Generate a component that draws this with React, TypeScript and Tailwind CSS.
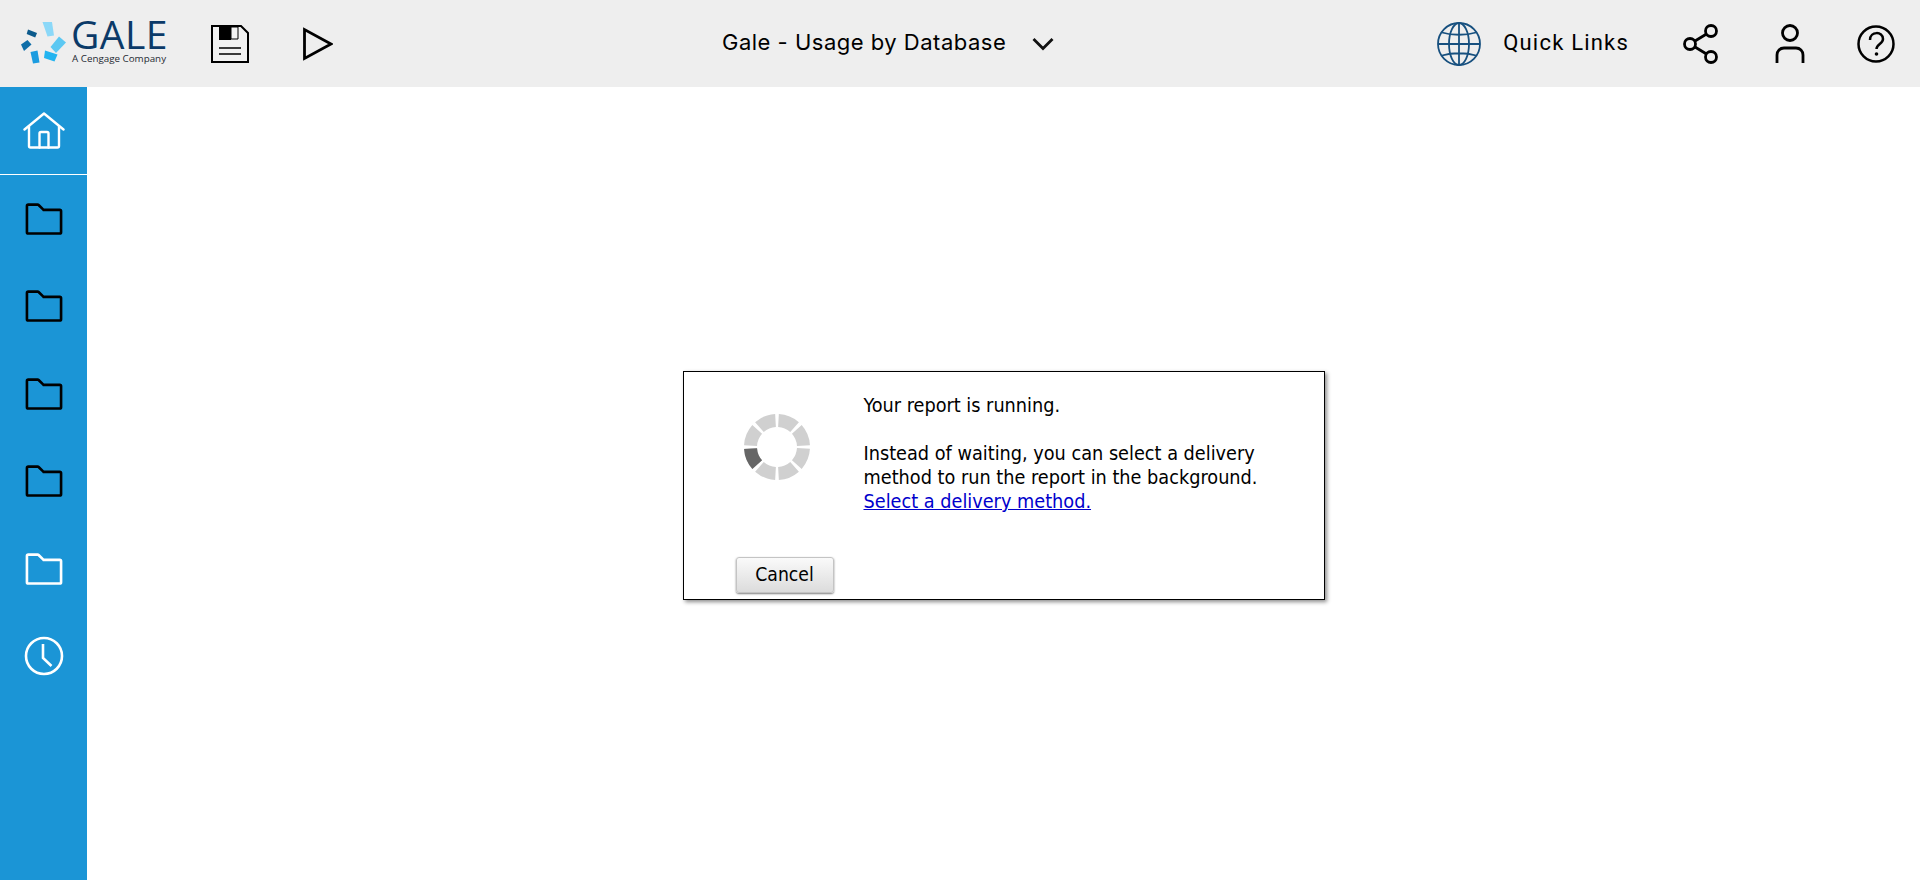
import React from "react";

function FolderIcon({ className }: { className: string }) {
  return (
    <svg viewBox="0 0 32 32" className={className} fill="currentColor">
      <path d="M11.17,6l3.42,3.41.58.59H28V26H4V6h7.17m0-2H4A2,2,0,0,0,2,6V26a2,2,0,0,0,2,2H28a2,2,0,0,0,2-2V10a2,2,0,0,0-2-2H16L12.59,4.59A2,2,0,0,0,11.17,4Z" />
    </svg>
  );
}

function HomeIcon() {
  return (
    <svg viewBox="0 0 42 38" className="w-[42px] h-[38px] text-white" fill="none" stroke="currentColor" strokeWidth="2.4" strokeLinejoin="round" strokeLinecap="round">
      <path d="M1.5 17.5 21 1.5l19.5 16" />
      <path d="M6 14.5V34a1.5 1.5 0 0 0 1.5 1.5h27A1.5 1.5 0 0 0 36 34V14.5" />
      <path d="M16.5 35.5V21.5a1.5 1.5 0 0 1 1.5-1.5h6a1.5 1.5 0 0 1 1.5 1.5v14" />
    </svg>
  );
}

function ClockIcon() {
  return (
    <svg viewBox="0 0 40 40" className="w-[40px] h-[40px] text-white" fill="none" stroke="currentColor" strokeWidth="2.6">
      <circle cx="20" cy="20" r="18" />
      <path d="M19 8v14l8.5 8" strokeLinejoin="miter" />
    </svg>
  );
}

function GaleLogo() {
  return (
    <div className="flex items-start">
      <svg viewBox="0 0 46 46" className="w-[46px] h-[46px] mt-[21px] shrink-0">
        <path d="M21.5 1h9.5l2 13.5-6.5 1z" fill="#8bd8f8" />
        <path d="M7 8.5l9 3.5-1.8 4.5-8.5-3.5z" fill="#0c5a8c" />
        <path d="M41 14.5l7 6-10 10.5-5.500-6z" fill="#5cc8f2" transform="translate(-3 1)" />
        <path d="M0 23.500l6.500-4.500 4 4.500-7.500 6.500z" fill="#0f6ea8" />
        <path d="M9.500 31l7-1.500 2 12-6.500 1z" fill="#1b9ce0" />
        <path d="M24 29.500l12.500 4-3 7-10.500-3.500z" fill="#22b4f0" />
      </svg>
      <div className="flex flex-col ml-[4px] mt-[14px]">
        <span className="font-['Open_Sans',sans-serif] font-medium text-[39px] leading-[39px] tracking-[0.5px] text-[#0b3a68]">GALE</span>
        <span className="font-['Open_Sans',sans-serif] text-[9.800px] leading-[12px] text-[#1f2a33] ml-[1px] whitespace-nowrap">A Cengage Company</span>
      </div>
    </div>
  );
}

function Spinner() {
  return (
    <svg viewBox="0 0 68 68" className="w-[68px] h-[68px] blur-[0.4px]" fill="none">
      <circle cx="34" cy="34" r="26.500" stroke="#d0d0d0" strokeWidth="13" pathLength="160" strokeDasharray="17 3" strokeDashoffset="-1.500" />
      <circle cx="34" cy="34" r="26.500" stroke="#666666" strokeWidth="13" pathLength="160" strokeDasharray="17 143" strokeDashoffset="-1.500" transform="rotate(135 34 34)" />
    </svg>
  );
}

export default function App() {
  const folders = ["text-black", "text-black", "text-black", "text-black", "text-white"];

  return (
    <div className="w-full h-[880px] flex flex-col bg-white overflow-hidden">
      <header className="h-[87px] bg-[#eeeeee] flex items-center shrink-0">
        <div className="ml-[21px] w-[147px] h-[87px]">
          <GaleLogo />
        </div>
        <svg viewBox="0 0 38 38" className="w-[38px] h-[38px] ml-[43px]">
          <path d="M1 1h29l7 7v29H1z" fill="#f2f2f2" stroke="#000000" strokeWidth="2" />
          <path d="M8 1h12v14H8z" fill="#000000" />
          <path d="M20 2h7v12h-7z" fill="#f2f2f2" stroke="#000000" strokeWidth="1" />
          <path d="M8 23h22M8 29h22" stroke="#000000" strokeWidth="1.600" />
        </svg>
        <svg viewBox="0 0 30 34" className="w-[30px] h-[34px] ml-[54px]" fill="none" stroke="#000000" strokeWidth="2.800" strokeLinejoin="miter">
          <path d="M1.500 2.500v29L28 17z" />
        </svg>
        <div className="flex-1 flex items-center pl-[389px]">
          <span className="font-['Inter',sans-serif] text-[22px] tracking-[0.5px] text-black mb-[2px]">Gale - Usage by Database</span>
          <svg viewBox="0 0 22 14" className="w-[22px] h-[14px] ml-[26px]" fill="none" stroke="#111111" strokeWidth="2.800">
            <path d="M1.500 2l9.500 9.500L20.500 2" />
          </svg>
        </div>
        <svg viewBox="0 0 44 44" className="w-[44px] h-[44px]" fill="none" stroke="#17507f" strokeWidth="1.800">
          <circle cx="22" cy="22" r="21" />
          <ellipse cx="22" cy="22" rx="10" ry="21" />
          <path d="M22 1v42M1 22h42M5 10.500c10 3 24 3 34 0M5 33.500c10-3 24-3 34 0" />
        </svg>
        <span className="font-['Roboto',sans-serif] text-[22px] text-black ml-[22px] tracking-[1.200px] mb-[2px]">Quick Links</span>
        <svg viewBox="0 0 36 40" className="w-[36px] h-[40px] ml-[54px]" fill="none" stroke="#000000" strokeWidth="2.800">
          <circle cx="7" cy="20" r="5.500" />
          <circle cx="28" cy="7" r="5.500" />
          <circle cx="28" cy="33" r="5.500" />
          <path d="M12 17 23.500 10M12 23l11.500 7" />
        </svg>
        <svg viewBox="0 0 30 40" className="w-[30px] h-[40px] ml-[56px]" fill="none" stroke="#000000" strokeWidth="2.800">
          <circle cx="15" cy="9" r="7.500" />
          <path d="M2 39V31c0-4 3-7 7-7h12c4 0 7 3 7 7v8" />
        </svg>
        <svg viewBox="0 0 38 38" className="w-[38px] h-[38px] ml-[52px] mr-[25px]" fill="none" stroke="#000000" strokeWidth="2.500">
          <circle cx="19" cy="19" r="17.500" />
          <path d="M13 15c0-9 13-9 13-1 0 5-6.500 5-6.500 10" />
          <circle cx="19.500" cy="29" r="1.800" fill="#000000" stroke="none" />
        </svg>
      </header>

      <div className="flex-1 flex min-h-0">
        <nav className="w-[87px] bg-[#1b95d6] flex flex-col shrink-0">
          <div className="h-[88px] flex items-center justify-center border-b border-white">
            <HomeIcon />
          </div>
          {folders.map((color, i) => (
            <div key={i} className="h-[87.500px] flex items-center justify-center">
              <FolderIcon className={`w-[42px] h-[42px] ${color}`} />
            </div>
          ))}
          <div className="h-[87.500px] flex items-center justify-center">
            <ClockIcon />
          </div>
        </nav>

        <main className="flex-1 flex items-start justify-center pt-[284px]">
          <div className="w-[642px] h-[229px] border border-black bg-white shadow-[2px_2px_4px_rgba(0,0,0,0.45)] flex flex-col">
            <div className="flex pt-[22px]">
              <div className="w-[180px] pl-[59px] pt-[19px] shrink-0">
                <Spinner />
              </div>
              <div className="font-['DejaVu_Sans_Condensed','DejaVu_Sans',sans-serif] text-[19.700px] leading-[24px] text-black">
                <p>Your report is running.</p>
                <p className="mt-[24px]">Instead of waiting, you can select a delivery</p>
                <p>method to run the report in the background.</p>
                <a className="text-[#0000cc] underline">Select a delivery method.</a>
              </div>
            </div>
            <button className="mt-auto mb-[6px] ml-[52px] w-[98px] h-[36px] rounded-[3px] border border-[#c4c4c4] bg-gradient-to-b from-[#fafafa] to-[#dcdcdc] shadow-[0_1px_2px_rgba(0,0,0,0.5)] font-['DejaVu_Sans_Condensed','DejaVu_Sans',sans-serif] text-[19.200px] text-black">
              Cancel
            </button>
          </div>
        </main>
      </div>
    </div>
  );
}
